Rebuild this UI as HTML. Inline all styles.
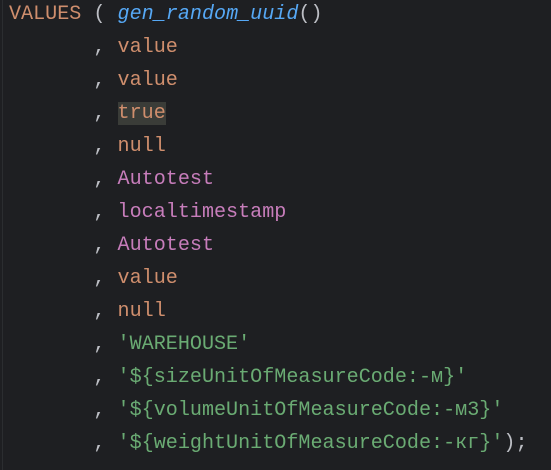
<!DOCTYPE html>
<html><head><style>
html,body{margin:0;padding:0;width:551px;height:470px;background:#1e1f22;overflow:hidden}
.g{position:absolute;left:2px;top:0;width:1px;height:470px;background:#2b2d30}
pre{position:absolute;left:9px;top:-2px;margin:0;font-family:"Liberation Mono","DejaVu Sans Mono",monospace;font-size:20.1px;line-height:33px;color:#bcbec4;white-space:pre}
.k{color:#cf8e6d}.f{color:#56a8f5;font-style:italic}.p{color:#c77dbb}.s{color:#6aab73}
.h{background:#3a3c38}
</style></head><body><div class="g"></div>
<pre><span class="k">VALUES</span> ( <span class="f">gen_random_uuid</span>()
       , <span class="k">value</span>
       , <span class="k">value</span>
       , <span class="k h">true</span>
       , <span class="k">null</span>
       , <span class="p">Autotest</span>
       , <span class="p">localtimestamp</span>
       , <span class="p">Autotest</span>
       , <span class="k">value</span>
       , <span class="k">null</span>
       , <span class="s">'WAREHOUSE'</span>
       , <span class="s">'${sizeUnitOfMeasureCode:-м}'</span>
       , <span class="s">'${volumeUnitOfMeasureCode:-м3}'</span>
       , <span class="s">'${weightUnitOfMeasureCode:-кг}'</span>);</pre>
</body></html>
